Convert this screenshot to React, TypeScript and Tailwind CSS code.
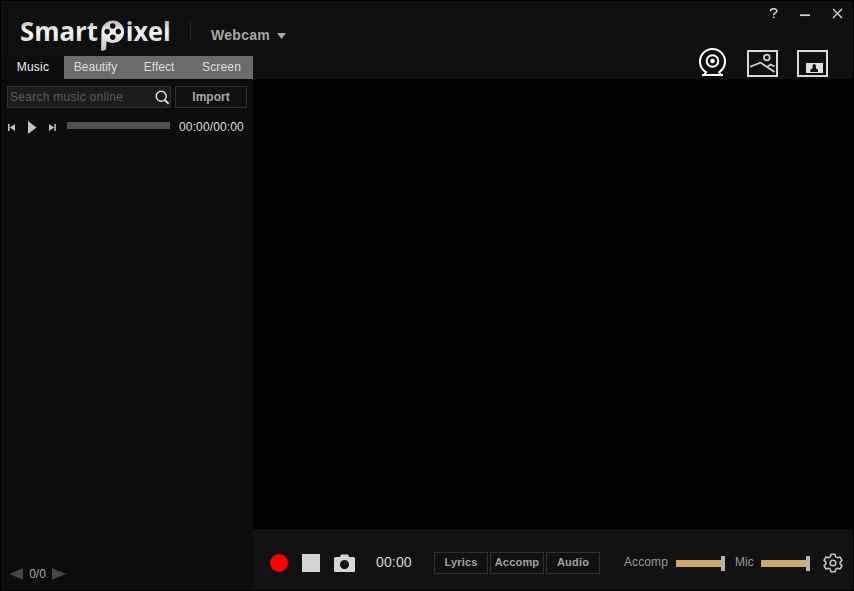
import React from "react";

function Logo() {
  return (
    <svg className="block h-[52px] w-[156px]" viewBox="0 -10 156 52">
      <defs>
        <linearGradient id="silver" gradientUnits="userSpaceOnUse" x1="0" y1="2" x2="0" y2="33">
          <stop offset="0" stopColor="#b5b5b5" />
          <stop offset="0.4" stopColor="#f8f8f8" />
          <stop offset="0.65" stopColor="#dedede" />
          <stop offset="1" stopColor="#c0c0c0" />
        </linearGradient>
      </defs>
      <g fill="url(#silver)" fontFamily="'Open Sans', 'Noto Sans', sans-serif" fontWeight="700" fontSize="27">
        <text x="0" y="23" textLength="78" lengthAdjust="spacingAndGlyphs">Smart</text>
        <text x="105.7" y="23" textLength="45" lengthAdjust="spacingAndGlyphs">ixel</text>
      </g>
      <path
        fill="url(#silver)"
        fillRule="evenodd"
        d="M81 32.5L81.5 13A11.3 11.3 0 1 1 86.6 23.2L86 31.5Q84 33 81 32.5ZM92.7 5.2a2.8 2.8 0 1 0 .01 0ZM87.1 10.8a2.8 2.8 0 1 0 .01 0ZM98.3 10.8a2.8 2.8 0 1 0 .01 0ZM92.7 16.4a2.8 2.8 0 1 0 .01 0Z"
      />
    </svg>
  );
}

function WindowControls() {
  return (
    <svg className="block h-[14px] w-[76px]" viewBox="768 6 76 14" fill="none" stroke="#d6d6d6">
      <path d="M770.3 11.2Q770.3 8.7 773.6 8.7T776.9 11Q776.9 12.2 775.2 13Q773.6 13.8 773.6 15.2" strokeWidth="1.4" />
      <path d="M772.8 17.4H774.4" strokeWidth="1.5" />
      <path d="M800 15.2H810" strokeWidth="1.7" />
      <path d="M833 9L842 18M842 9L833 18" strokeWidth="1.4" />
    </svg>
  );
}

function SourceIcons() {
  return (
    <svg className="block h-[31px] w-[132px]" viewBox="697 47 132 31" fill="none">
      <g stroke="#fff" strokeWidth="2">
        <path d="M706 72.2A12.5 12.5 0 1 1 719 72.2" />
        <circle cx="712.5" cy="61" r="5.8" />
        <path d="M702 75H723" />
        <path d="M706.5 71.5L704 75M718.5 71.5L721 75" />
      </g>
      <circle cx="712.5" cy="61" r="2.3" fill="#fff" />
      <rect x="748" y="51" width="29" height="25" stroke="#d8d8d8" strokeWidth="2" />
      <g stroke="#d0d0d0" strokeWidth="1.7">
        <circle cx="766.8" cy="57.5" r="2.9" />
        <path d="M750 66.8L760.5 62.6L774.5 72M766.8 67.3L770.4 64.5L774.6 66.6" />
      </g>
      <rect x="798" y="51" width="29" height="25" stroke="#d8d8d8" strokeWidth="2" />
      <path d="M806 63H823V73H806Z" fill="#dedede" />
      <path d="M810.3 72V69.8L812.6 68.2V65.5Q812.6 64 814.2 64T815.9 65.5V68.2L818 69.8V72Z" fill="#111" />
    </svg>
  );
}

function Sidebar() {
  return (
    <aside className="flex w-[252px] shrink-0 flex-col bg-[#0c0c0c]">
      <div className="ml-[6px] mt-[7px] flex gap-[4px]">
        <div className="flex h-[22px] w-[164px] items-center border border-[#303030] bg-[#1c1c1c] pl-[2px]">
          <span className="w-[145px] whitespace-nowrap text-[12px] leading-[20px] tracking-[0.27px] text-[#5b5b5b]">Search music online</span>
          <svg className="h-[16px] w-[16px] shrink-0" viewBox="0 0 16 16" fill="none" stroke="#dedede">
            <circle cx="7.2" cy="7.2" r="5" strokeWidth="1.5" />
            <path d="M10.8 11L14.6 14.8" strokeWidth="2" />
          </svg>
        </div>
        <button className="h-[22px] w-[72px] border border-[#303030] bg-[#0f0f0f] text-[12px] font-bold leading-[20px] text-[#a7a7a7]">Import</button>
      </div>
      <div className="ml-[6px] mt-[9px] flex h-[20px] items-center">
        <svg className="h-[20px] w-[50px] shrink-0" viewBox="7 117 50 20" fill="#c2c2c2">
          <path d="M8 124H9.5V131H8ZM15 124V131L9.8 127.5ZM28 121L36.6 127.5L28 134ZM49 124L54.2 127.5L49 131ZM54.3 124H55.8V131H54.3Z" />
        </svg>
        <div className="mb-[3px] ml-[10px] h-[7px] w-[103px] bg-[#505050]" />
        <span className="ml-[9px] whitespace-nowrap text-[12px] leading-[20px] tracking-[0.14px] text-[#dedede]">00:00/00:00</span>
      </div>
      <div className="mb-[6px] ml-[8px] mt-auto flex h-[20px] items-center">
        <svg className="h-[12px] w-[14px]" viewBox="0 0 14 12"><path d="M14 .3V11.7L0 6Z" fill="#464646" /></svg>
        <span className="w-[29px] text-center text-[12px] leading-[20px] text-[#aaa]">0/0</span>
        <svg className="h-[12px] w-[14px]" viewBox="0 0 14 12"><path d="M0 .3V11.7L14 6Z" fill="#464646" /></svg>
      </div>
    </aside>
  );
}

function VolumeSlider() {
  return (
    <div className="flex h-[15px] w-[49px] items-center">
      <div className="h-[7px] w-[45px] bg-[#cba970]" />
      <div className="h-[15px] w-[4px] bg-[#b2b2b2]" />
    </div>
  );
}

const outlineButton = "h-[22px] w-[54px] whitespace-nowrap border border-[#303030] pb-[2px] text-[11px] font-bold leading-[18px] tracking-[0.2px] text-[#a2a2a2]";

function ControlBar() {
  return (
    <footer className="flex h-[61px] items-center bg-[#111] pb-[1px] pl-[17px] pt-[8px]">
      <div className="h-[18px] w-[18px] rounded-full bg-[#ff0000]" />
      <div className="ml-[14px] h-[18px] w-[18px] bg-[#d5d5d5]" />
      <svg className="ml-[14px] h-[18px] w-[21px]" viewBox="0 0 21 18">
        <path fillRule="evenodd" fill="#d5d5d5" d="M1.5 3H6L7 .5H14L15 3H19.5Q21 3 21 4.5V16.5Q21 18 19.5 18H1.5Q0 18 0 16.5V4.5Q0 3 1.5 3ZM10.5 6a4.5 4.5 0 1 0 .01 0Z" />
      </svg>
      <span className="mb-[2px] ml-[21px] w-[58px] whitespace-nowrap text-[14px] leading-[20px] tracking-[0.15px] text-[#d5d5d5]">00:00</span>
      <div className="flex gap-[2px]">
        <button className={outlineButton}>Lyrics</button>
        <button className={outlineButton}>Accomp</button>
        <button className={outlineButton}>Audio</button>
      </div>
      <span className="mb-[2px] ml-[24px] w-[52px] whitespace-nowrap text-[12px] leading-[20px] tracking-[0.1px] text-[#999]">Accomp</span>
      <VolumeSlider />
      <span className="mb-[2px] ml-[10px] w-[26px] whitespace-nowrap text-[12px] leading-[20px] text-[#999]">Mic</span>
      <VolumeSlider />
      <svg className="ml-[13px] h-[20px] w-[20px]" viewBox="0 0 20 20" fill="none" stroke="#c6c6c6" strokeWidth="1.5">
        <path strokeLinejoin="round" d="M8 1.2H12L12.7 3.8L14.3 4.7L17 4L19 7.4L17.1 9.1V10.9L19 12.6L17 16L14.3 15.3L12.7 16.2L12 18.8H8L7.3 16.2L5.7 15.3L3 16L1 12.6L2.9 10.9V9.1L1 7.4L3 4L5.7 4.7L7.3 3.8Z" />
        <circle cx="10" cy="10" r="2.8" />
      </svg>
    </footer>
  );
}

export default function App() {
  return (
    <div className="flex h-[591px] w-[854px] flex-col overflow-hidden border border-black bg-[#0f0f0f] font-['Liberation_Sans',Arial,sans-serif]">
      <header className="flex h-[78px] shrink-0 justify-between">
        <div className="flex flex-col">
          <div className="flex h-[55px] pl-[19px]">
            <div className="mt-[7px]"><Logo /></div>
            <div className="ml-[14px] mt-[20px] h-[20px] w-px bg-[#272727]" />
            <div className="ml-[20px] mt-[24px] flex h-[20px] items-center">
              <span className="w-[66px] text-[14px] font-bold leading-[20px] tracking-[0.3px] text-[#a7a7a7]">Webcam</span>
              <svg className="mt-[2px] h-[6px] w-[9px]" viewBox="0 0 9 6"><path d="M0 0H9L4.5 6Z" fill="#a9a9a9" /></svg>
            </div>
          </div>
          <nav className="flex h-[23px] w-[252px] text-center text-[12px] leading-[22px]">
            <div className="w-[63px] bg-[#0c0c0c] pl-[1px] tracking-[0.25px] text-[#eee]">Music</div>
            <div className="flex w-[189px] bg-[#6b6b6b] text-[#dedede]">
              <span className="w-[63px]">Beautify</span>
              <span className="w-[63px] pl-[1px]">Effect</span>
              <span className="w-[63px] tracking-[0.15px]">Screen</span>
            </div>
          </nav>
        </div>
        <div className="flex flex-col pt-[5px]">
          <div className="self-end pr-[9px]"><WindowControls /></div>
          <div className="mt-[27px] pr-[24px]"><SourceIcons /></div>
        </div>
      </header>
      <div className="flex min-h-0 flex-1">
        <Sidebar />
        <main className="flex w-[600px] flex-col">
          <div className="flex-1 bg-black" />
          <ControlBar />
        </main>
      </div>
    </div>
  );
}
